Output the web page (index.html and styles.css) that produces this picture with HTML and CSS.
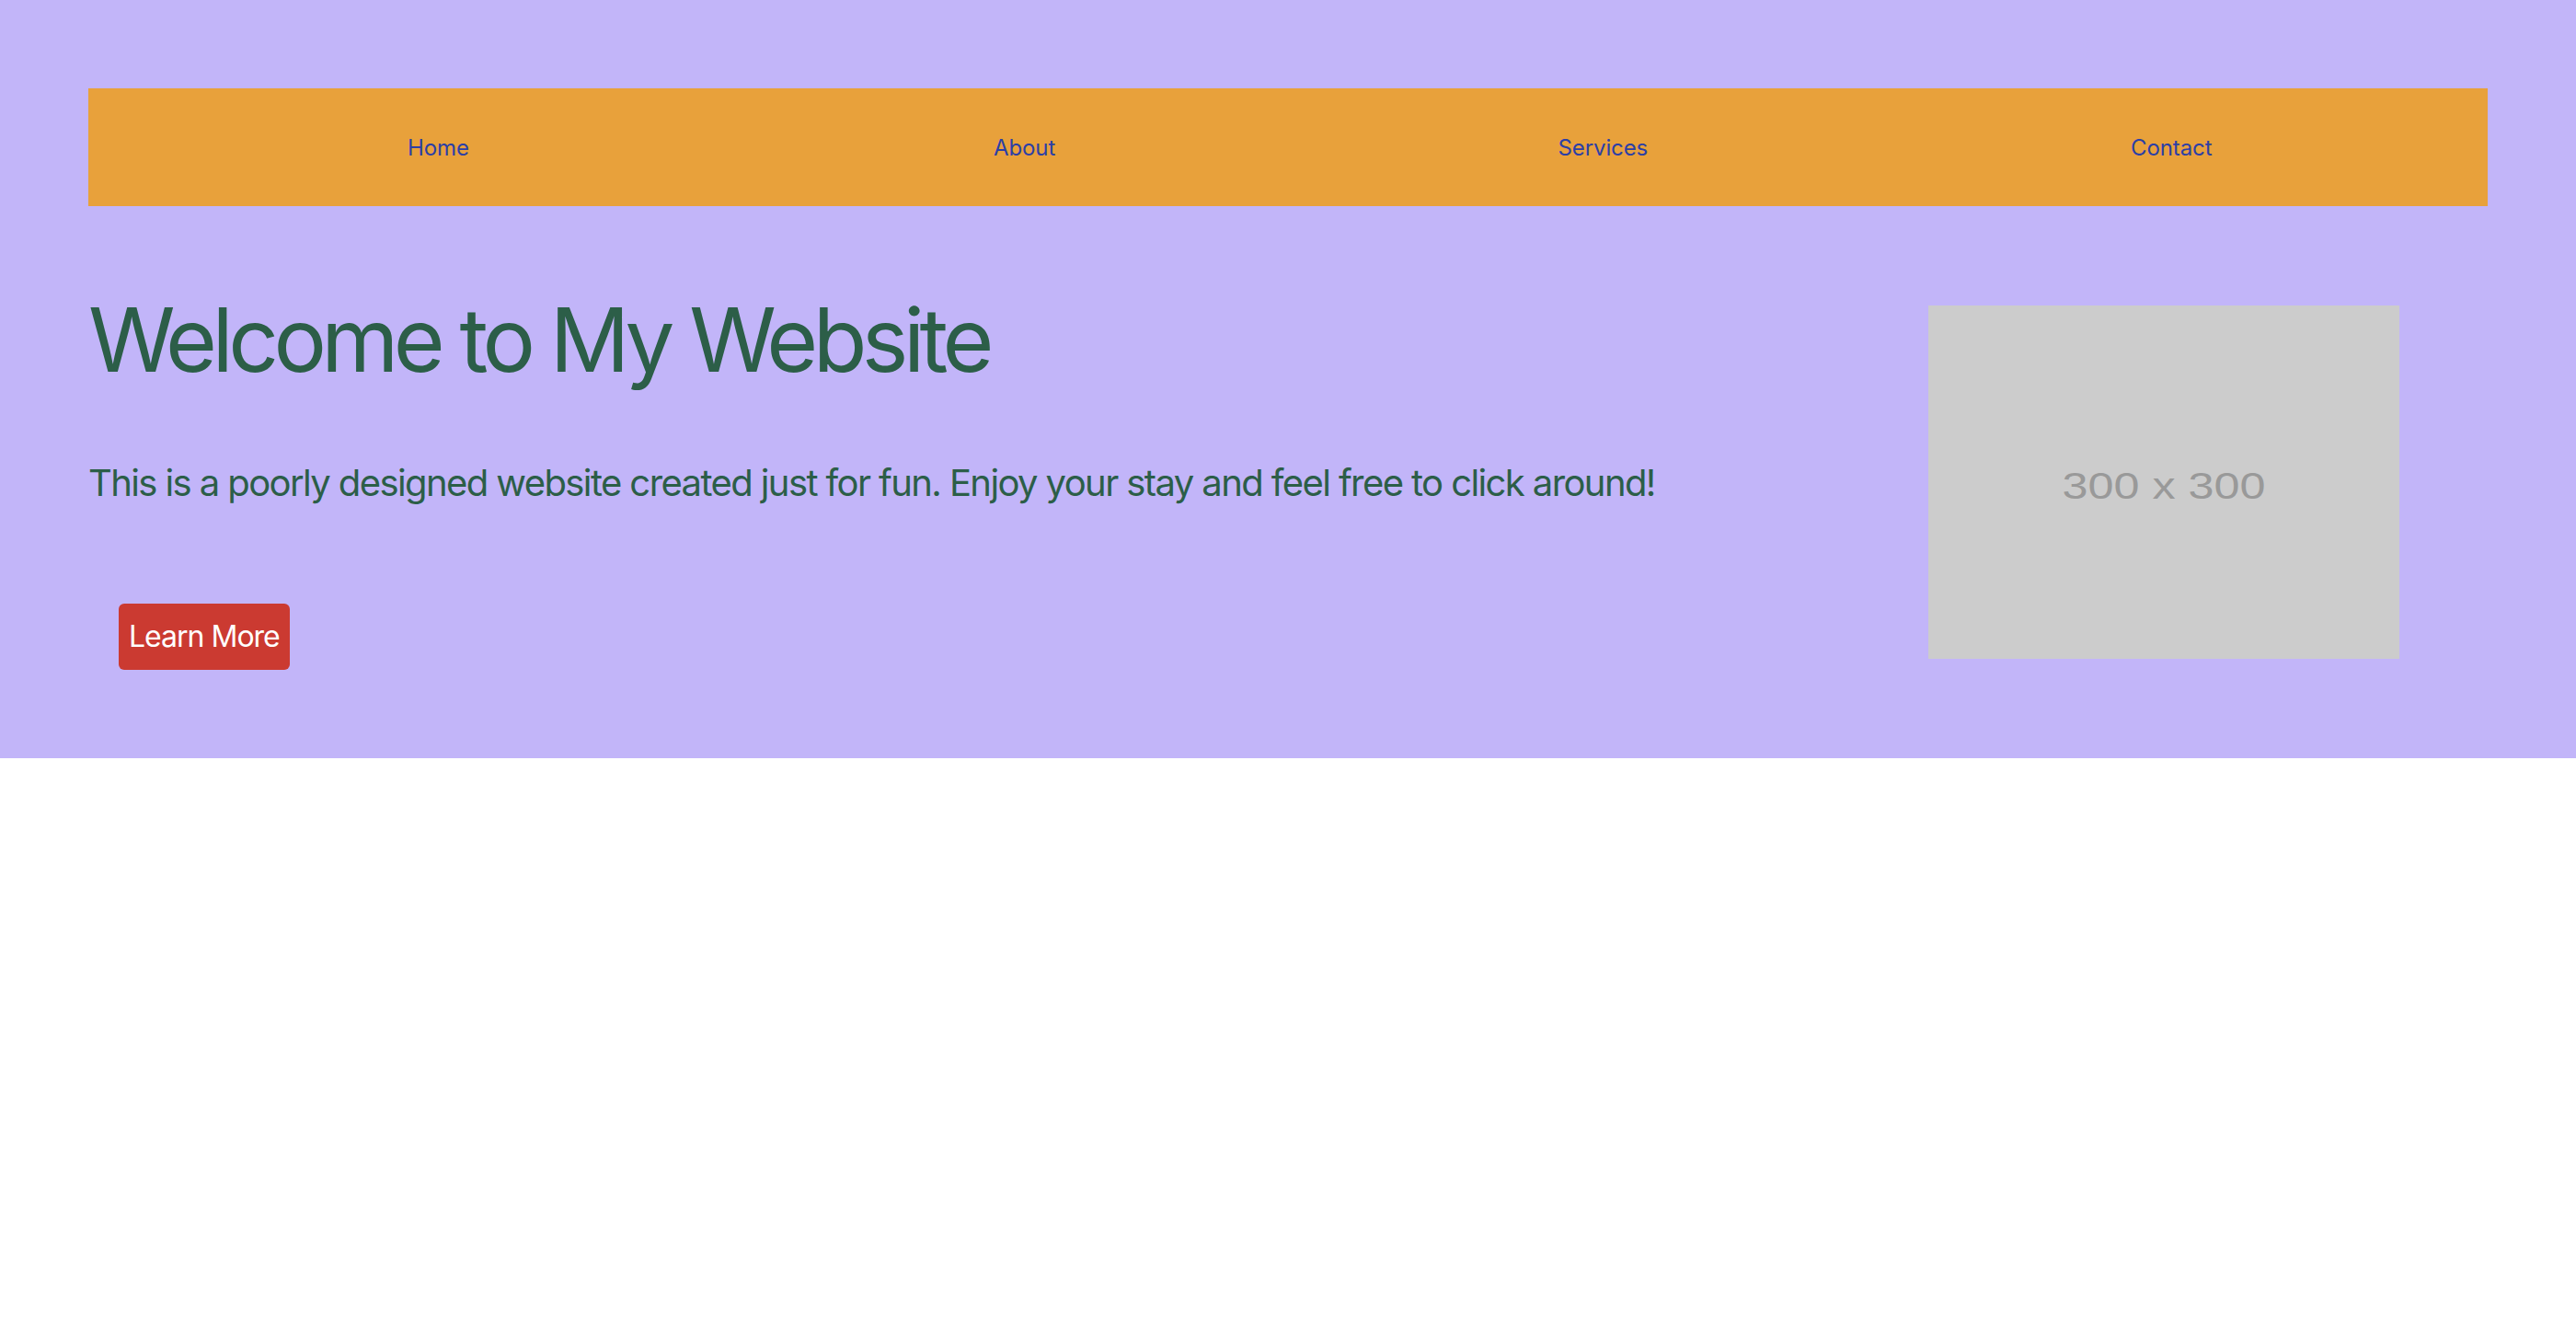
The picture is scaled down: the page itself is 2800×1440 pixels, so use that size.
FILE: index.html
```html
<!DOCTYPE html>
<html lang="en">
<head>
<meta charset="utf-8">
<title>My Website</title>
<link rel="stylesheet" href="styles.css">
</head>
<body>
<div class="page">
  <nav class="nav">
    <ul class="nav-list">
      <li><a href="#">Home</a></li>
      <li><a href="#">About</a></li>
      <li><a href="#">Services</a></li>
      <li><a href="#">Contact</a></li>
    </ul>
  </nav>
  <section class="hero">
    <div class="hero-text">
      <h1 class="hero-title">Welcome to My Website</h1>
      <p class="hero-lead">This is a poorly designed website created just for fun. Enjoy your stay and feel free to click around!</p>
      <div class="hero-actions"><a class="btn" href="#">Learn More</a></div>
    </div>
    <div class="hero-media">
      <svg class="placeholder" viewBox="0 0 300 300" preserveAspectRatio="none" width="512" height="384">
        <rect width="300" height="300" fill="#cccccc"/>
        <text x="150" y="164" text-anchor="middle" font-family="Liberation Sans, Arial, sans-serif" font-size="31.5" fill="#999999" textLength="129.5" lengthAdjust="spacingAndGlyphs">300 x 300</text>
      </svg>
    </div>
  </section>
</div>
</body>
</html>
```

FILE: styles.css
```css
html, body {
  margin: 0;
  padding: 0;
  background: #ffffff;
}

body {
  font-family: Inter, "Noto Sans", sans-serif;
}

.page {
  background: #c2b5f9;
  padding: 96px;
}

.nav {
  background: #e8a13b;
  height: 128px;
  display: flex;
  align-items: center;
}

.nav-list {
  list-style: none;
  margin: 0;
  padding: 1px 0 0 347px;
  display: grid;
  grid-template-columns: 637px 613.5px 622.5px auto;
  width: 100%;
}

.nav-list a {
  color: #2c3fa6;
  text-decoration: none;
  font-size: 24px;
  line-height: 30px;
  letter-spacing: -0.1px;
}

.hero {
  display: flex;
  justify-content: space-between;
  align-items: flex-start;
  margin-top: 87.5px;
}

.hero-title {
  margin: 0;
  font-size: 96px;
  line-height: 1.2;
  font-weight: 400;
  letter-spacing: -5.6px;
  color: #2c5e48;
}

.hero-lead {
  margin: 68px 0 0;
  font-size: 40px;
  line-height: 60px;
  letter-spacing: -1.6px;
  color: #2c5e48;
}

.hero-actions {
  margin-top: 101.5px;
  padding-left: 33px;
}

.btn {
  display: inline-block;
  background: #cb3a31;
  color: #ffffff;
  text-decoration: none;
  font-size: 32px;
  line-height: 40px;
  letter-spacing: -1px;
  padding: 16px 11px;
  border-radius: 6px;
}

.hero-media {
  margin-top: 20.5px;
  margin-right: 96px;
}

.placeholder {
  display: block;
}
```
